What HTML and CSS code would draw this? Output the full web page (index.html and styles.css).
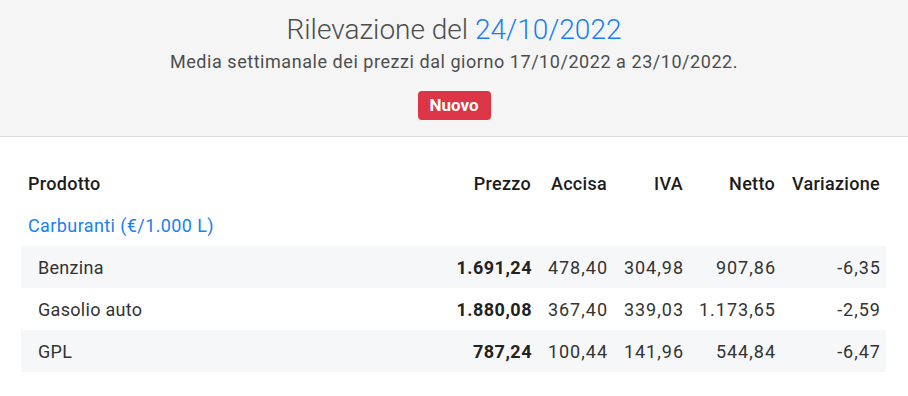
FILE: index.html
```html
<!DOCTYPE html>
<html lang="it">
<head>
<meta charset="utf-8">
<title>Rilevazione prezzi</title>
<link rel="stylesheet" href="styles.css">
</head>
<body>
<header class="hero">
  <h1 class="hero-title">Rilevazione del <span class="date">24/10/2022</span></h1>
  <p class="hero-sub">Media settimanale dei prezzi dal giorno 17/10/2022 a 23/10/2022.</p>
  <span class="badge">Nuovo</span>
</header>
<main class="content">
  <div class="table">
    <div class="row head">
      <div class="cell name">Prodotto</div>
      <div class="cell num">Prezzo</div>
      <div class="cell num">Accisa</div>
      <div class="cell num">IVA</div>
      <div class="cell num">Netto</div>
      <div class="cell num">Variazione</div>
    </div>
    <div class="row group">
      <div class="cell name">Carburanti (€/1.000 L)</div>
    </div>
    <div class="row item stripe">
      <div class="cell name sub">Benzina</div>
      <div class="cell num strong">1.691,24</div>
      <div class="cell num">478,40</div>
      <div class="cell num">304,98</div>
      <div class="cell num">907,86</div>
      <div class="cell num">-6,35</div>
    </div>
    <div class="row item">
      <div class="cell name sub">Gasolio auto</div>
      <div class="cell num strong">1.880,08</div>
      <div class="cell num">367,40</div>
      <div class="cell num">339,03</div>
      <div class="cell num">1.173,65</div>
      <div class="cell num">-2,59</div>
    </div>
    <div class="row item stripe">
      <div class="cell name sub">GPL</div>
      <div class="cell num strong">787,24</div>
      <div class="cell num">100,44</div>
      <div class="cell num">141,96</div>
      <div class="cell num">544,84</div>
      <div class="cell num">-6,47</div>
    </div>
  </div>
</main>
</body>
</html>
```

FILE: styles.css
```css
* { box-sizing: border-box; }
html, body { margin: 0; padding: 0; background: #fff; }
body {
  font-family: Roboto, "Noto Sans", sans-serif;
  color: #333;
}
.hero {
  background: #f5f5f5;
  border-bottom: 1px solid #dcdcdc;
  height: 137px;
  display: flex;
  flex-direction: column;
  align-items: center;
  padding-top: 12px;
}
.hero-title {
  margin: 0;
  font-weight: 300;
  font-size: 28px;
  line-height: 36px;
  color: #4d4d4d;
}
.hero-title .date { color: #1a7ff0; }
.hero-sub {
  margin: 0;
  font-size: 18px;
  line-height: 27px;
  letter-spacing: 0.55px;
  color: #4d4d4d;
  font-weight: 400;
}
.badge {
  margin-top: 16px;
  background: #dc3545;
  color: #fff;
  font-weight: 700;
  font-size: 17px;
  line-height: 29px;
  height: 29px;
  width: 73px;
  text-align: center;
  border-radius: 4px;
}
.content { padding: 25px 22px 0 21px; }
.table { display: flex; flex-direction: column; }
.row {
  display: grid;
  grid-template-columns: 1fr 92px 76px 76px 92px 105px;
  height: 42px;
  align-items: center;
}
.row.stripe { background: #f6f7f9; }
.cell { padding: 0 6px 0 7px; font-size: 18px; white-space: nowrap; letter-spacing: 0.3px; }
.num { text-align: right; padding-right: 5px; }
.head .num { padding-right: 6px; }
.item .num { letter-spacing: 1px; }
.head .cell { font-weight: 500; color: #1c1c1c; }
.group .cell { color: #1a7ff0; grid-column: 1 / -1; letter-spacing: 0.4px; }
.sub { padding-left: 17px; }
.item .strong { font-weight: 700; color: #222; letter-spacing: 0.5px; }
```
